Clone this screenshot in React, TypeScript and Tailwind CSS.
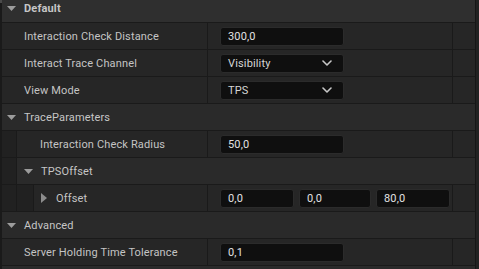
import React from "react";

const FONT = { fontFamily: "Roboto, 'Noto Sans', sans-serif" };

function DownTri() {
  return (
    <svg width="9" height="5" viewBox="0 0 9 5" className="shrink-0">
      <path d="M0 0 L9 0 L4.5 5 Z" fill="#9c9c9c" />
    </svg>
  );
}

function RightTri() {
  return (
    <svg width="6" height="10" viewBox="0 0 6 10" className="shrink-0">
      <path d="M0 0 L6 5 L0 10 Z" fill="#8c8c8c" />
    </svg>
  );
}

function Chevron() {
  return (
    <svg width="10" height="6" viewBox="0 0 10 6" className="shrink-0">
      <path d="M1 1 L5 5 L9 1" fill="none" stroke="#c8c8c8" strokeWidth="1.6" strokeLinecap="round" strokeLinejoin="round" />
    </svg>
  );
}

function Box({ text, w = "w-[124px]" }: { text: string; w?: string }) {
  return (
    <div className={`${w} h-[19px] rounded-[3px] bg-[#0f0f0f] border border-[#2b2b2b] flex items-center pl-[7px] text-[#e2e2e2]`}>
      {text}
    </div>
  );
}

function Dropdown({ text }: { text: string }) {
  return (
    <div className="w-[124px] h-[19px] rounded-[3px] bg-[#0f0f0f] border border-[#2b2b2b] flex items-center justify-between pl-[7px] pr-[11px] text-[#d6d6d6]">
      <span>{text}</span>
      <Chevron />
    </div>
  );
}

function Indent() {
  return (
    <>
      <div className="w-[14px] shrink-0 bg-[#212121]" />
      <div className="w-px shrink-0 bg-[#1a1a1a]" />
    </>
  );
}

function PropRow({
  label,
  children,
  nameW,
  labelPad,
  indents = 0,
  arrow,
}: {
  label: string;
  children: React.ReactNode;
  nameW: string;
  labelPad: string;
  indents?: number;
  arrow?: boolean;
}) {
  return (
    <div className="flex h-[27px] border-b border-[#1a1a1a]">
      {indents >= 1 && <Indent />}
      {indents >= 2 && (
        <>
          <div className="w-[16px] shrink-0 bg-[#212121]" />
          <div className="w-px shrink-0 bg-[#1a1a1a]" />
        </>
      )}
      <div className={`${nameW} shrink-0 bg-[#262626] flex items-center ${labelPad} text-[#c4c4c4]`}>
        {arrow && (
          <span className="mr-[9px] flex">
            <RightTri />
          </span>
        )}
        {label}
      </div>
      <div className="w-px shrink-0 bg-[#1a1a1a]" />
      <div className="w-[244px] shrink-0 bg-[#262626] flex items-center pl-[12px] gap-[5px]">{children}</div>
      <div className="w-px shrink-0 bg-[#1a1a1a]" />
      <div className="flex-1 bg-[#262626]" />
    </div>
  );
}

function HeaderRow({
  label,
  bg,
  bold,
  indents = 0,
  arrowPad = "pl-[5px]",
}: {
  label: string;
  bg: string;
  bold?: boolean;
  indents?: number;
  arrowPad?: string;
}) {
  return (
    <div className="flex h-[27px] border-b border-[#1a1a1a]">
      {indents >= 1 && <Indent />}
      <div className={`flex-1 ${bg} flex items-center ${arrowPad}`}>
        <DownTri />
        <span className={`ml-[8px] ${bold ? "font-bold text-[#c6c6c6]" : "text-[#c6c6c6]"}`}>{label}</span>
      </div>
    </div>
  );
}

export default function App() {
  return (
    <div className="w-[479px] h-[269px] overflow-hidden bg-[#1a1a1a] flex text-[11px] leading-none tracking-[0.15px]" style={FONT}>
      <div className="w-[2px] shrink-0 relative">
        <div className="absolute left-0 top-0 w-[2px] h-[3px] bg-[#4a4a4a]" />
      </div>
      <div className="w-[473px] shrink-0 flex flex-col">
        {/* Default header (partially scrolled) */}
        <div className="flex h-[23px] border-b border-[#1a1a1a]">
          <div className="flex-1 bg-[#2f2f2f] flex items-center pl-[5px] pb-[5px]">
            <DownTri />
            <span className="ml-[8px] font-bold text-[#c6c6c6]">Default</span>
          </div>
        </div>

        <PropRow label="Interaction Check Distance" nameW="w-[205px]" labelPad="pl-[22px]">
          <Box text="300,0" />
        </PropRow>
        <PropRow label="Interact Trace Channel" nameW="w-[205px]" labelPad="pl-[22px]">
          <Dropdown text="Visibility" />
        </PropRow>
        <PropRow label="View Mode" nameW="w-[205px]" labelPad="pl-[22px]">
          <Dropdown text="TPS" />
        </PropRow>

        <HeaderRow label="TraceParameters" bg="bg-[#2a2a2a]" />

        <PropRow label="Interaction Check Radius" nameW="w-[190px]" labelPad="pl-[23px]" indents={1}>
          <Box text="50,0" />
        </PropRow>

        <HeaderRow label="TPSOffset" bg="bg-[#2a2a2a]" indents={1} arrowPad="pl-[7px]" />

        <PropRow label="Offset" nameW="w-[173px]" labelPad="pl-[7px]" indents={2} arrow>
          <Box text="0,0" w="w-[74px]" />
          <Box text="0,0" w="w-[72px]" />
          <Box text="80,0" w="w-[74px]" />
        </PropRow>

        <HeaderRow label="Advanced" bg="bg-[#2a2a2a]" />

        <PropRow label="Server Holding Time Tolerance" nameW="w-[205px]" labelPad="pl-[22px]">
          <Box text="0,1" />
        </PropRow>

        <div className="flex-1 bg-[#2a2a2a]" />
      </div>
      <div className="flex-1 flex">
        <div className="w-px bg-[#161616]" />
        <div className="flex-1 bg-[#222222]" />
      </div>
    </div>
  );
}
